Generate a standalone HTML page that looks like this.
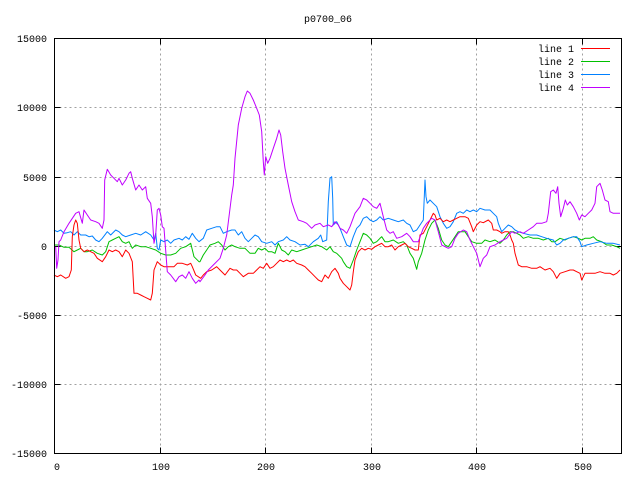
<!DOCTYPE html>
<html><head><meta charset="utf-8"><style>
html,body{margin:0;padding:0;background:#fff;}
svg{display:block}
text{font-family:"Liberation Mono",monospace;font-size:10px;fill:#000}
</style></head><body>
<svg width="640" height="480" xmlns="http://www.w3.org/2000/svg">
<rect width="640" height="480" fill="#fff"/>
<g stroke="#a0a0a0" stroke-width="1" stroke-dasharray="2,3" fill="none">
<path d="M160.5 38.5V453.5M265.5 38.5V453.5M371.5 38.5V453.5M476.5 38.5V453.5M582.5 38.5V453.5"/>
<path d="M54.5 107.5H621.5M54.5 177.5H621.5M54.5 246.5H621.5M54.5 315.5H621.5M54.5 384.5H621.5"/>
</g>
<g stroke="#000" stroke-width="1" fill="none">
<path d="M54.5 107.5h6M621.5 107.5h-6M54.5 177.5h6M621.5 177.5h-6M54.5 246.5h6M621.5 246.5h-6M54.5 315.5h6M621.5 315.5h-6M54.5 384.5h6M621.5 384.5h-6"/>
<path d="M160.5 453.5v-6M160.5 38.5v6M265.5 453.5v-6M265.5 38.5v6M371.5 453.5v-6M371.5 38.5v6M476.5 453.5v-6M476.5 38.5v6M582.5 453.5v-6M582.5 38.5v6"/>
</g>
<g fill="none" stroke-width="1" stroke-linejoin="round">
<polyline stroke="#00c000" points="54,245 59,245 64,247.3 69,247.3 74,251.7 77.3,250 80.7,248.3 84,251.7 87.3,251.7 92.3,250 97.3,253.3 102.3,255 105.7,251.7 109,241.7 112.3,240 115.7,238.3 119,236.7 122.3,241.7 125.7,243.3 129,241.7 132.3,248.3 135.7,245 140.7,246.7 145.7,246.7 150.7,248.3 155.7,250 160.7,253.3 165.7,255 170.7,255 175.7,253.3 180.7,248.3 185.7,246.7 190.7,243.3 194,256.7 199,261.7 200,261.7 203.3,255 206.7,250 210,245 215,243.3 218.3,241.7 221.7,245 225,250 228.3,246.7 231.7,245 235,246.7 240,248.3 245,248.3 250,253.3 255,253.3 258.3,248.3 261.7,250 265,248.3 268.3,251.7 271.7,251.7 275,253.3 278.3,243.3 281.7,250 285,251.7 288.3,255 291.7,250 296.7,251.7 301.7,250 306.7,248.3 311.7,246.7 316.7,245 321.7,246.7 326.7,250 330,246.7 333.3,251.7 336.7,253.3 341.7,258.3 343.3,261.7 346.7,266.7 350,268.3 353.3,260 356.7,250 360,241.7 363.3,233.3 366.7,235 370,238.3 373.3,243.3 376.7,241.7 380,238.3 381.7,236.7 385,241.7 388.3,241.7 393.3,240 398.3,243.3 403.3,241.7 406.7,245 410,253.3 413.3,258.3 416.7,269.3 418.3,261.7 421.7,253.3 425,240 428.3,230 431.7,223.3 435,220 438.3,228.3 441.7,240 445,245 448.3,246.7 451.7,241.7 455,236.7 458.3,231.7 461.7,231.7 465,231.7 468.3,236.7 471.7,241.7 476.7,243.3 481.7,243.3 485,240 490,241.7 495,240 500,243.3 503.3,240 506.7,235 510,231.7 513.3,231.7 516.7,233.3 520,235 523.3,238.3 528.3,236.7 533.3,238.3 538.3,238.3 543.3,240 548.3,238.3 551.7,241.7 555,241.7 560,238.3 565,240 568.3,238.3 573.3,236.7 578.3,238.3 581.7,240 585,238.3 590,238.3 593.3,236.7 596.7,240 601.7,241.7 606.7,245 611.7,245 616.7,246.7 620,248.3"/>
<polyline stroke="#0080ff" points="54,230 57.3,231.7 60.7,230 64,233.3 67.3,232.7 70.7,231.7 74,235 77.3,231.7 80.7,235 85.7,235 89,236.7 92.3,236 95.7,240 99,241.7 102.3,238.3 107.3,231.7 110.7,235 115.7,230 119,231.7 122.3,235 125.7,236.7 130.7,235 135.7,233.3 140.7,235 145.7,231.7 150.7,235 154,240 155.7,233.3 157.3,248.3 159,250 160.7,240 164,241.7 167.3,240 170.7,243.3 174,240 179,238.3 182.3,240 185.7,236.7 189,239.3 192.3,233.3 195.7,238.3 199,241.7 203.3,238.3 206.7,230 211.7,228.3 216.7,226.7 220,226.7 223.3,233.3 226.7,231.7 231.7,230 235,230 238.3,235 241.7,231.7 245,238.3 248.3,241.7 251.7,238.3 255,235 258.3,236.7 261.7,241.7 266.7,243.3 271.7,241.7 275,245 278.3,241.7 283.3,240 286.7,236.7 290,240 295,241.7 300,245 305,244.3 308.3,246.7 313.3,241.7 318.3,238.3 320.7,235 322.7,241.7 326.7,240 328.3,201.7 330,178.3 331.7,176.7 332.7,198.3 333.3,225 336.7,221.7 340,228.3 343.3,236.7 346.7,245 350,246.7 353.3,236.7 356.7,228.3 360,225 363.3,218.3 366.7,216.7 370,220 373.3,221.7 376.7,220 380,216.7 383.3,220 388.3,218.3 393.3,220 398.3,221.7 403.3,220 406.7,223.3 410,225 413.3,231.7 416.7,230 420,225 423.3,220 425,180 426,196.7 427.3,203.3 430,200 433.3,203.3 436.7,206.7 440,216.7 443.3,223.3 446.7,228.3 450,226.7 453.3,221.7 456.7,213.3 460,211.7 463.3,213.3 466.7,210 470,211.7 473.3,210 476.7,211.7 480,208.3 485,210 490,210 493.3,213.3 496.7,216.7 498.3,223.3 501.7,231.7 505,228.3 508.3,225 511.7,226.7 515,230 518.3,231.7 523.3,233.3 530,235 536.7,235 541.7,236.7 546.7,238.3 553.3,240 556.7,245 560,243.3 563.3,240 568.3,238.3 573.3,236.7 576.7,236.7 580,241.7 581.7,246.7 586.7,245 593.3,243.3 600,241.7 606.7,243.3 613.3,243.3 620,245"/>
<polyline stroke="#ff0000" points="54,275 57.3,276.7 60.7,275 65.7,278.3 69,276.7 71.3,270 72.3,236.7 74,225 75.7,220 77.3,223.3 79,240 80.7,248.3 84,251.7 87.3,250 90.7,251.7 94,253.3 97.3,258.3 102.3,261.7 105.7,256.7 109,250 112.3,251.7 115.7,250 119,251.7 122.3,256.7 125.7,250 129,253.3 132.3,261.7 134,293.3 137.3,293.3 140.7,295 144,296.7 147.3,298.3 150.7,300 152.3,293.3 154,270 157.3,261.7 160.7,265 164,266.7 169,266.7 174,266.7 177.3,263.3 182.3,263.3 187.3,265 190.7,263.3 192.3,266.7 195.7,275 200.7,278.3 203.3,275 206.7,271.7 211.7,270 216.7,266.7 220,270 225,275 230,268.3 233.3,270 236.7,270 240,273.3 243.3,276.7 248.3,273.3 253.3,273.3 256.7,270 260,266.7 263.3,268.3 266.7,263.3 270,268.3 273.3,266.7 276.7,263.3 280,260 283.3,261.7 286.7,260 290,261.7 293.3,260 296.7,263.3 301.7,265 305,266.7 308.3,270 311.7,273.3 315,276.7 318.3,280 321.7,281.7 325,275 328.3,278.3 331.7,271.7 335,268.3 338.3,273.3 340,278.3 343.3,283.3 346.7,286.7 350,290 351.7,285 353.3,271.7 355,260 358.3,251.7 361.7,248.3 365,250 368.3,248.3 371.7,249.3 375,246.7 378.3,245 381.7,243.3 385,246.7 388.3,246.7 391.7,245 395,250 398.3,246.7 401.7,245 405,243.3 408.3,246.7 411.7,248.3 415,250 418.3,250 420,235 423.3,233.3 426.7,226.7 430,220 433.3,213.3 435,215 436.7,220 440,218.3 443.3,221.7 446.7,220 450,221.7 453.3,220 456.7,218.3 460,216.7 465,216.7 468.3,218.3 471.7,226.7 473.3,231.7 476.7,225 480,221.7 483.3,222.7 488.3,220 491.7,223.3 493.3,230 496.7,230 500,231.7 501.7,233.3 505,231.7 508.3,231.7 510,235 511.7,240 513.3,243.3 515,253.3 518.3,265 521.7,266.7 526.7,266.7 531.7,268.3 536.7,268.3 540,266.7 545,270 550,268.3 553.3,271.7 556.7,278.3 560,273.3 565,271.7 570,270 573.3,270 576.7,271.7 580,273.3 581.7,280 585,273.3 590,273.3 595,273.3 600,271.7 605,273.3 610,273.3 613.3,275 616.7,273.3 620,270"/>
<polyline stroke="#c000ff" points="55.7,246.7 56.7,268.3 58,260 59,241.7 60.7,240 64,231.7 69,223.3 75.7,213.3 79,211.7 82.3,223.3 84,210 87.3,215 90.7,220 95.7,221.7 99,223.3 102.3,228.3 104,220 104.7,180 107.3,169.3 110.7,175 114,178.3 117.3,181.7 119,178.3 122.3,185 125.7,180 129,173.3 130.7,171.7 132.3,178.3 135.7,190 139,185 142.3,190 145.7,186.7 147.3,198.3 150.7,203.3 152.3,216.7 154,243.3 155.7,235 157.3,210 159,208.3 160.7,215 162.3,226.7 164,228.3 167.3,271.7 170.7,275 175.7,281.7 179,276.7 182.3,275 185.7,278.3 189,271.7 192.3,278.3 195.7,283.3 199,280 200,281.7 205,275 208.3,270 213.3,265 220,258.3 223.3,248.3 226.7,235 231.7,195 233.3,185 235,158.3 238.3,125 241.7,108.3 245,96.7 247.3,91 250,93.3 253.3,100 256.7,108.3 259.3,115 261.7,131.7 263.3,161.7 264.3,175 265.7,156.7 267.7,163.3 270,158.3 273.3,148.3 276.7,138.3 279,130 280.7,135 282.7,151.7 285,168.3 288.3,185 291.7,201.7 295,211.7 298.3,220 303.3,221.7 306.7,223.3 311.7,228.3 315,225 320,223.3 323.3,226.7 328.3,225 331.7,226.7 335,221.7 338.3,225 340,228.3 343.3,230 346.7,233.3 350,226.7 355,213.3 360,206.7 363.3,198.3 366.7,200 370,203.3 373.3,206.7 376.7,208.3 380,203.3 383.3,216.7 386.7,230 390,233.3 393.3,231.7 396.7,238.3 401.7,236.7 406.7,233.3 410,236.7 413.3,241.7 418.3,241.7 423.3,228.3 426.7,223.3 431.7,218.3 435,220 438.3,231.7 440,238.3 441.7,245 445,246.7 448.3,248.3 451.7,246.7 455,238.3 458.3,233.3 463.3,230 466.7,231.7 470,240 473.3,246.7 476.7,253.3 480,266.7 483.3,258.3 486.7,255 490,246.7 495,245 500,241.7 503.3,240 506.7,238.3 511.7,231.7 515,233.3 520,231.7 523.3,233.3 528.3,230 533.3,226.7 536.7,223.3 541.7,223.3 546.7,221.7 548.3,213.3 550.7,191.7 553.3,190 556,193.3 557.7,186.7 559,203.3 560.7,216.7 563.3,208.3 565.3,200 567.3,205 570,201.7 573.3,206.7 576.7,213.3 579.3,220 581.7,215 585,216.7 588.3,213.3 591.7,210 595,203.3 596.7,186.7 600,183.3 602.3,190 605,200 608.3,201.7 610,211.7 613.3,213.3 616.7,213.3 620,213.3"/>
</g>
<rect x="54.5" y="38.5" width="567" height="415" fill="none" stroke="#000" stroke-width="1"/>
<g stroke-width="1">
<path d="M581 48.5h29" stroke="#ff0000"/>
<path d="M581 61.5h29" stroke="#00c000"/>
<path d="M581 74.5h29" stroke="#0080ff"/>
<path d="M581 87.5h29" stroke="#c000ff"/>
</g>
<g text-anchor="end">
<text x="574" y="52">line 1</text>
<text x="574" y="65">line 2</text>
<text x="574" y="78">line 3</text>
<text x="574" y="91">line 4</text>
<text x="47" y="42">15000</text>
<text x="47" y="111">10000</text>
<text x="47" y="181">5000</text>
<text x="47" y="250">0</text>
<text x="47" y="319">-5000</text>
<text x="47" y="388">-10000</text>
<text x="47" y="457">-15000</text>
</g>
<g text-anchor="middle">
<text x="328" y="22">p0700_06</text>
<text x="57" y="470">0</text>
<text x="161" y="470">100</text>
<text x="266" y="470">200</text>
<text x="372" y="470">300</text>
<text x="477" y="470">400</text>
<text x="583" y="470">500</text>
</g>
</svg>
</body></html>
